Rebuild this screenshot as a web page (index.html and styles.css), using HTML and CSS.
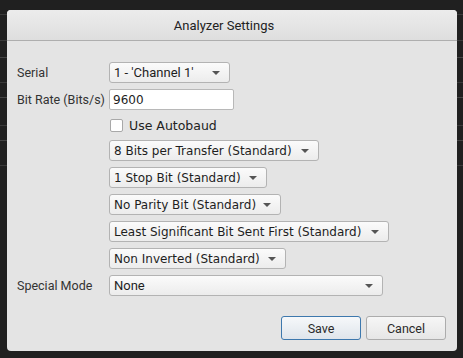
FILE: index.html
```html
<!DOCTYPE html>
<html>
<head>
<meta charset="utf-8">
<link rel="stylesheet" href="styles.css">
</head>
<body>
<div class="backdrop">
  <div class="dialog">
    <div class="titlebar">Analyzer Settings</div>
    <div class="content">
      <div class="form">
        <div class="label">Serial</div>
        <div class="field"><div class="combo roboto w-serial"><span>1 - 'Channel 1'</span><i class="arrow"></i></div></div>

        <div class="label">Bit Rate (Bits/s)</div>
        <div class="field"><div class="input">9600</div></div>

        <div class="label short"></div>
        <div class="field short"><span class="checkbox"></span><span class="check-text">Use Autobaud</span></div>

        <div class="label"></div>
        <div class="field"><div class="combo w-bits"><span>8 Bits per Transfer (Standard)</span><i class="arrow"></i></div></div>

        <div class="label"></div>
        <div class="field"><div class="combo w-stop"><span>1 Stop Bit (Standard)</span><i class="arrow"></i></div></div>

        <div class="label"></div>
        <div class="field"><div class="combo w-parity"><span>No Parity Bit (Standard)</span><i class="arrow"></i></div></div>

        <div class="label"></div>
        <div class="field"><div class="combo w-lsb"><span>Least Significant Bit Sent First (Standard)</span><i class="arrow"></i></div></div>

        <div class="label"></div>
        <div class="field"><div class="combo w-inv"><span>Non Inverted (Standard)</span><i class="arrow"></i></div></div>

        <div class="label">Special Mode</div>
        <div class="field"><div class="combo roboto w-special"><span>None</span><i class="arrow"></i></div></div>
      </div>
      <div class="buttons">
        <div class="btn btn-primary">Save</div>
        <div class="btn">Cancel</div>
      </div>
    </div>
  </div>
</div>
</body>
</html>
```
FILE: styles.css
```css
html, body {
  margin: 0;
  padding: 0;
  background: #232323;
  width: 463px;
  height: 358px;
  overflow: hidden;
}

.backdrop {
  width: 463px;
  height: 358px;
  box-sizing: border-box;
  padding: 10px 6px 7px 7px;
  background:
    linear-gradient(#3a3a3a, #3a3a3a) 0 14px / 100% 1px no-repeat,
    linear-gradient(#3a3a3a, #3a3a3a) 0 40px / 100% 1px no-repeat,
    linear-gradient(#444, #444) 0 57px / 100% 1px no-repeat,
    linear-gradient(#3a3a3a, #3a3a3a) 0 82px / 100% 1px no-repeat,
    linear-gradient(#444, #444) 0 97px / 100% 1px no-repeat,
    linear-gradient(#3a3a3a, #3a3a3a) 0 125px / 100% 1px no-repeat,
    linear-gradient(#444, #444) 0 140px / 100% 1px no-repeat,
    linear-gradient(#3a3a3a, #3a3a3a) 0 165px / 100% 1px no-repeat,
    #202020;
}

.dialog {
  width: 450px;
  height: 341px;
  background: #e4e4e4;
  border-radius: 4px;
  display: flex;
  flex-direction: column;
  overflow: hidden;
  font-family: Roboto, "Liberation Sans", sans-serif;
  color: #2a2a2a;
}

.titlebar {
  height: 30px;
  border-bottom: 1px solid #aeaeae;
  background: linear-gradient(#ececec, #dedede);
  display: flex;
  align-items: center;
  justify-content: center;
  font-size: 13px;
  color: #222;
  padding-right: 16px;
  box-sizing: content-box;
}

.content {
  flex: 1;
  display: flex;
  flex-direction: column;
  padding: 21px 11px 11px 10px;
}

.form {
  display: grid;
  grid-template-columns: 92px 1fr;
  row-gap: 6px;
}

.label {
  font-size: 12.5px;
  color: #333;
  display: flex;
  align-items: center;
  height: 21px;
}

.field {
  display: flex;
  align-items: center;
  height: 21px;
}

.label.short,
.field.short {
  height: 18px;
}

.combo {
  box-sizing: border-box;
  height: 21px;
  border: 1px solid #b3b3b3;
  border-radius: 3px;
  background: linear-gradient(#fbfbfb, #ececec);
  display: flex;
  align-items: center;
  justify-content: space-between;
  padding: 0 9px 0 4px;
  font-family: "DejaVu Sans", sans-serif;
  font-size: 12px;
  color: #1e1e1e;
}

.combo.roboto {
  font-family: Roboto, "Liberation Sans", sans-serif;
  font-size: 13px;
}

.arrow {
  width: 0;
  height: 0;
  border-left: 4px solid transparent;
  border-right: 4px solid transparent;
  border-top: 4px solid #555;
  margin-top: 1px;
}

.w-serial { width: 121px; }
.w-bits { width: 210px; }
.w-stop { width: 158px; }
.w-parity { width: 172px; }
.w-lsb { width: 280px; }
.w-inv { width: 177px; }
.w-special { width: 274px; }

.input {
  box-sizing: border-box;
  width: 125px;
  height: 21px;
  border: 1px solid #b8b8b8;
  border-radius: 2px;
  background: #fff;
  display: flex;
  align-items: center;
  padding: 0 3px;
  font-family: "DejaVu Sans", sans-serif;
  font-size: 12px;
  color: #1e1e1e;
}

.checkbox {
  box-sizing: border-box;
  width: 13px;
  height: 13px;
  margin-left: 1px;
  border: 1px solid #a8a8a8;
  border-radius: 2px;
  background: #fff;
}

.check-text {
  margin-left: 6px;
  font-family: "DejaVu Sans", sans-serif;
  font-size: 12.5px;
  color: #222;
}

.buttons {
  margin-top: auto;
  display: flex;
  justify-content: flex-end;
  gap: 5px;
}

.btn {
  box-sizing: border-box;
  width: 80px;
  height: 24px;
  border: 1px solid #acacac;
  border-radius: 3px;
  background: linear-gradient(#f6f6f6, #e6e6e6);
  display: flex;
  align-items: center;
  justify-content: center;
  font-size: 12.5px;
  color: #2a2a2a;
}

.btn-primary {
  border-color: #3d78ad;
  background: linear-gradient(#f6f8fa, #dfe5eb);
}
```
